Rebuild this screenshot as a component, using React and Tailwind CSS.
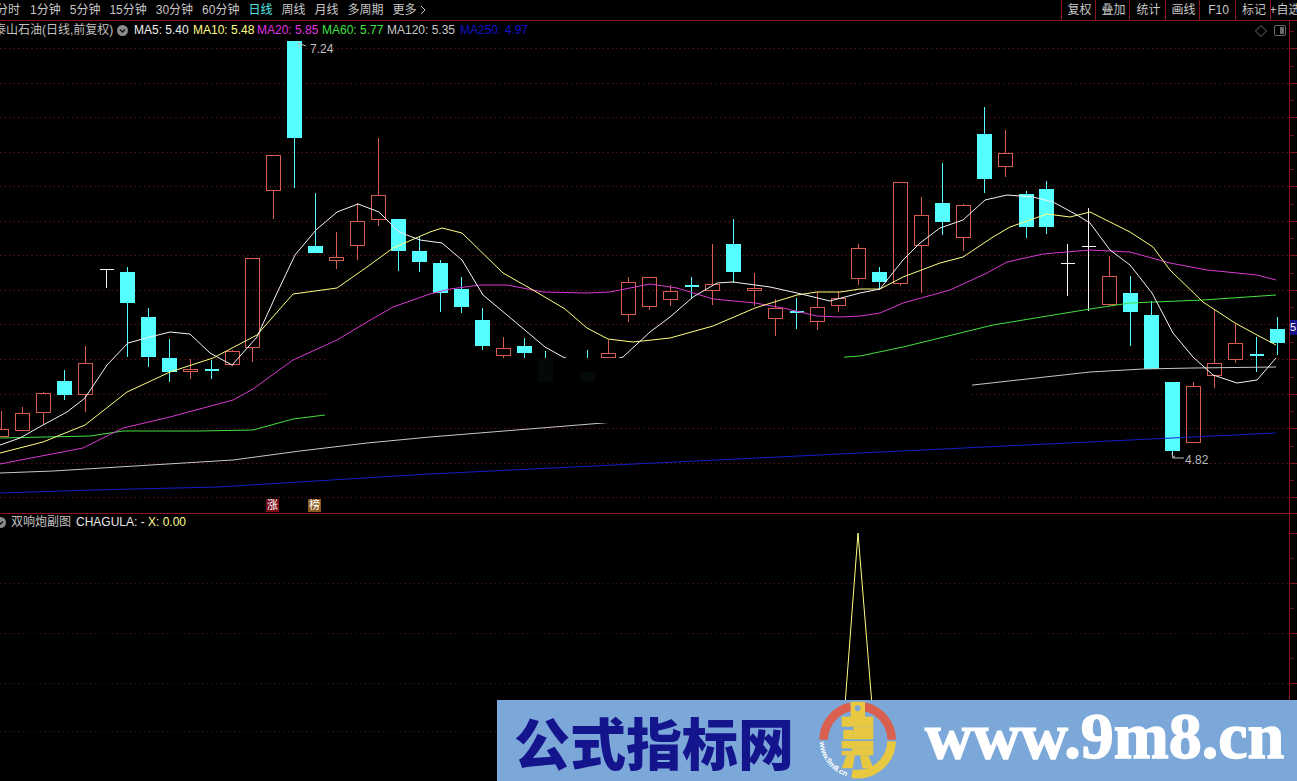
const SANS = 'font-["Liberation_Sans","Noto_Sans_CJK_SC",sans-serif]'

const PERIODS = [
  { label: '分时', cls: '-ml-[4px] mr-[1px]' },
  { label: '1分钟' }, { label: '5分钟' }, { label: '15分钟' }, { label: '30分钟' }, { label: '60分钟' },
  { label: '日线', cls: 'text-[#55e8e8]' }, { label: '周线' }, { label: '月线' }, { label: '多周期' },
]
const TOOLS = [
  ['复权', 'w-[34px]'], ['叠加', 'w-[34px]'], ['统计', 'w-[36px]'], ['画线', 'w-[34px]'],
  ['F10', 'w-[36px]'], ['标记', 'w-[35px]'], ['+自选', 'w-[27px]'],
]
const LEGEND = [
  ['MA5: 5.40', 'text-[#f0f0f0]', 'w-[59px]'],
  ['MA10: 5.48', 'text-[#ffff80]', 'w-[64px]'],
  ['MA20: 5.85', 'text-[#e030e0]', 'w-[65px]'],
  ['MA60: 5.77', 'text-[#40e040]', 'w-[65px]'],
  ['MA120: 5.35', 'text-[#c8c8c8]', 'w-[73px]'],
  ['MA250: 4.97', 'text-[#1414c0]', 'w-[70px]'],
]

// x, high, low, body top, body bottom, kind
const CANDLES = [
  [1, 411, 437, 429, 437, 'r'], [22, 407, 431, 413, 431, 'r'], [43, 392, 424, 393, 413, 'r'],
  [64, 370, 400, 381, 395, 'c'], [85, 346, 412, 363, 395, 'r'], [106, 269, 288, 269, 269, 'w'],
  [127, 267, 357, 272, 303, 'c'], [148, 308, 367, 317, 357, 'c'], [169, 339, 382, 358, 372, 'c'],
  [190, 359, 379, 369, 372, 'r'], [211, 360, 379, 369, 369, 'd'], [232, 350, 366, 351, 365, 'r'],
  [252, 258, 362, 258, 348, 'r'], [273, 155, 219, 155, 191, 'r'], [294, 41, 188, 41, 138, 'c'],
  [315, 193, 253, 246, 253, 'c'], [336, 232, 269, 257, 261, 'r'], [357, 203, 260, 221, 246, 'r'],
  [378, 138, 226, 195, 220, 'r'], [398, 219, 271, 219, 251, 'c'], [419, 237, 272, 251, 262, 'c'],
  [440, 260, 312, 263, 293, 'c'], [461, 277, 313, 289, 307, 'c'], [482, 308, 350, 320, 346, 'c'],
  [503, 337, 358, 348, 356, 'r'], [524, 338, 358, 346, 353, 'c'], [545, 351, 358, 358, 358, 'c'],
  [587, 350, 358, 358, 358, 'c'], [608, 340, 358, 353, 358, 'r'],
  [628, 277, 322, 282, 315, 'r'], [649, 277, 310, 277, 307, 'r'], [670, 285, 306, 291, 300, 'r'],
  [691, 277, 299, 285, 285, 'd'], [712, 244, 305, 284, 291, 'r'], [733, 219, 283, 244, 272, 'c'],
  [754, 273, 306, 288, 291, 'r'], [775, 299, 336, 308, 319, 'r'], [796, 298, 329, 311, 311, 'd'],
  [817, 292, 330, 307, 322, 'r'], [838, 292, 312, 298, 306, 'r'], [858, 244, 285, 248, 279, 'r'],
  [879, 267, 290, 272, 282, 'c'], [900, 182, 286, 182, 284, 'r'], [921, 197, 293, 215, 246, 'r'],
  [942, 163, 235, 203, 222, 'c'], [963, 204, 251, 205, 238, 'r'], [984, 107, 193, 134, 179, 'c'],
  [1005, 130, 177, 153, 167, 'r'], [1026, 191, 238, 194, 227, 'c'], [1046, 181, 234, 189, 227, 'c'],
  [1067, 244, 296, 263, 263, 'w'], [1088, 208, 311, 246, 246, 'w'], [1109, 256, 306, 276, 305, 'r'],
  [1130, 276, 346, 293, 312, 'c'], [1151, 301, 369, 315, 369, 'c'], [1172, 382, 456, 382, 451, 'c'],
  [1193, 382, 443, 386, 443, 'r'], [1214, 310, 388, 363, 376, 'r'], [1235, 324, 363, 343, 360, 'r'],
  [1256, 337, 372, 354, 354, 'd'], [1277, 317, 355, 329, 343, 'c'],
]

const MA_LINES = [
  { color: '#141ec8', pts: '0,493 93,490 217,487 430,474 860,453 1276,433' },
  { color: '#c8c8c8', pts: '0,473 53,471 200,462 233,460 300,451 367,443 430,437 603,423 973,385 1090,372 1143,369 1193,368 1276,367' },
  { color: '#44e040', pts: '0,438 90,436 123,431 200,431 253,430 293,419 325,415 840,365 845,357 860,356 903,347 993,325 1090,309 1130,303 1203,300 1276,295' },
  { color: '#d83ad0', pts: '0,464 83,448 123,428 170,417 233,400 253,389 293,360 337,340 367,322 393,307 430,294 450,289 480,285 507,285 543,292 587,293 610,292 650,284 677,288 713,299 755,303 783,308 817,316 840,317 860,316 880,313 903,303 950,290 987,273 1007,262 1043,254 1090,250 1130,252 1170,263 1207,270 1257,275 1276,280' },
  { color: '#ffff80', pts: '0,453 43,442 85,425 127,392 170,372 213,358 257,335 293,294 337,288 367,267 393,248 430,232 442,228 462,233 503,273 533,290 565,309 587,328 608,339 633,342 670,338 713,326 755,308 797,295 817,292 840,292 860,289 880,289 903,277 940,263 963,257 993,237 1010,227 1047,214 1070,217 1090,212 1130,232 1153,247 1170,270 1203,302 1235,323 1257,335 1276,345' },
  { color: '#f4f4f4', pts: '0,445 20,438 43,425 67,412 85,398 97,380 107,365 128,343 150,337 170,332 190,334 210,353 232,365 257,337 277,293 295,255 316,230 337,212 358,204 379,212 399,232 420,240 442,243 462,260 483,295 507,315 545,347 563,357 590,367 623,357 650,332 670,317 693,297 717,283 733,282 770,287 797,293 830,301 860,293 880,289 903,260 920,243 940,228 963,220 985,200 1007,195 1033,197 1053,202 1077,215 1090,223 1110,250 1130,265 1152,293 1173,333 1193,357 1213,375 1237,383 1257,380 1276,358' },
]

const MAIN_GRID = Array.from({ length: 14 }, (_, i) => Math.round(48 + i * 34.55) + 0.5)
const SUB_GRID = [583.5, 633.5, 683.5, 731.5]

function Candle({ c }) {
  const [raw, high, low, top, bottom, kind] = c
  const x = raw + 0.5
  if (kind === 'w' || kind === 'd') {
    const color = kind === 'w' ? '#f4f4f4' : '#55ffff'
    return (
      <g stroke={color}>
        <line x1={x} x2={x} y1={high} y2={low} />
        <line x1={x - 7} x2={x + 7} y1={top + 0.5} y2={top + 0.5} strokeWidth={kind === 'd' ? 2 : 1} />
      </g>
    )
  }
  if (kind === 'c') {
    return (
      <g>
        <line x1={x} x2={x} y1={high} y2={low} stroke="#55ffff" />
        <rect x={x - 7.5} y={top} width={15} height={Math.max(bottom - top, 1)} fill="#55ffff" />
      </g>
    )
  }
  return (
    <g stroke="#d95c50">
      <line x1={x} x2={x} y1={high} y2={top} />
      <line x1={x} x2={x} y1={bottom} y2={low} />
      <rect x={x - 7} y={top + 0.5} width={14} height={Math.max(bottom - top - 1, 1)} fill="none" />
    </g>
  )
}

function AxisTicks({ grid, dim }) {
  const step = grid.length > 1 ? (grid[1] - grid[0]) / 2 : 0
  return (
    <g stroke="#8a1420" shapeRendering="crispEdges">
      {grid.map(y => <line key={y} x1={1289} x2={1297} y1={y} y2={y} />)}
      {grid.map(y => <line key={`m${y}`} x1={1289} x2={1294} y1={y - step} y2={y - step} stroke={dim} />)}
    </g>
  )
}

function MainChart() {
  return (
    <svg className="absolute inset-0 block" width="1297" height="492" viewBox="0 21 1297 492">
      {MAIN_GRID.map(y => (
        <line key={y} x1={0} x2={1289} y1={y} y2={y} stroke="#7a1c1c" strokeDasharray="1 3.5" />
      ))}
      <g shapeRendering="crispEdges">
        {CANDLES.map(c => <Candle key={c[0]} c={c} />)}
      </g>
      {MA_LINES.map(l => <polyline key={l.color} points={l.pts} fill="none" stroke={l.color} strokeWidth="1" />)}
      {/* dark patch in the source picture */}
      <rect x="325" y="358" width="647" height="65" fill="#000" />
      <rect x="538" y="358" width="15" height="24" fill="#030808" />
      <rect x="580" y="372" width="15" height="10" fill="#030808" />
      <line x1="1289.5" x2="1289.5" y1="21" y2="513" stroke="#8a1420" />
      <AxisTicks grid={MAIN_GRID} dim="#6a1018" />
      <path d="M298 43 l8 3 M298 43 l2 5" stroke="#c0c0c0" fill="none" />
      <path d="M1172 453 l1 5 h11 M1172 458 l3 -2" stroke="#c0c0c0" fill="none" />
    </svg>
  )
}

function SubChart() {
  return (
    <svg className="absolute inset-0 block" width="1297" height="267" viewBox="0 514 1297 267">
      {SUB_GRID.map(y => (
        <line key={y} x1={0} x2={1289} y1={y} y2={y} stroke="#561414" strokeDasharray="1 3.5" />
      ))}
      <polyline points="845,705 858,533 872,705" fill="none" stroke="#ffff80" strokeWidth="1" />
      <line x1="1289.5" x2="1289.5" y1="514" y2="781" stroke="#8a1420" />
      <AxisTicks grid={[533.5, 583.5, 633.5, 683.5]} dim="#5a1018" />
    </svg>
  )
}

function RoundIcon({ cls }) {
  return (
    <svg className={cls} width="11" height="11" viewBox="0 0 11 11">
      <circle cx="5.5" cy="5.5" r="5.5" fill="#8c8c8c" />
      <path d="M3 4.5 L5.5 7 L8 4.5" fill="none" stroke="#111" strokeWidth="1.4" />
    </svg>
  )
}

function Logo() {
  return (
    <svg className="absolute left-[303px] top-0" width="120" height="81" viewBox="0 60 360 243">
      <g fill="none" strokeWidth="26">
        <path d="M71 179 A102 102 0 0 1 152 80" stroke="#d9604e" />
        <path d="M194 80 A102 102 0 0 1 275 179" stroke="#d9604e" />
        <path d="M275 184 A102 102 0 0 1 156 281" stroke="#e8c840" />
      </g>
      <g fill="#e8c840">
        <path fillRule="evenodd" d="M152 65 H195 V115 H152 Z M173 76 a9 9 0 1 0 0.01 0 Z" />
        <rect x="125" y="110" width="95" height="30" />
        <rect x="160" y="140" width="60" height="38" />
        <rect x="130" y="150" width="30" height="28" />
        <rect x="125" y="183" width="95" height="22" />
        <rect x="155" y="205" width="65" height="8" />
        <rect x="125" y="213" width="95" height="13" />
        <path d="M140 226 H165 L158 265 H125 Z" />
        <path d="M180 226 H205 L220 265 H187 Z" />
      </g>
      <defs>
        <path id="logo-arc" d="M59 186 A115 115 0 0 0 150 292" />
      </defs>
      <text fill="#fff" fontSize="23" fontWeight="700" fontFamily="Liberation Sans, sans-serif">
        <textPath href="#logo-arc">www.9m8.cn</textPath>
      </text>
    </svg>
  )
}

export default function App() {
  return (
    <div className={`w-[1297px] h-[781px] bg-black overflow-hidden relative flex flex-col ${SANS}`}>
      <div className="h-[21px] shrink-0 border-b border-[#8a1420] flex items-center text-[12px] text-[#c8c8c8] whitespace-nowrap">
        <div className="flex items-center gap-[9px]">
          {PERIODS.map(p => <span key={p.label} className={p.cls}>{p.label}</span>)}
          <span className="flex items-center gap-[3px]">
            更多
            <svg width="6" height="10" viewBox="0 0 6 10"><path d="M1 1 L5 5 L1 9" fill="none" stroke="#c8c8c8" /></svg>
          </span>
        </div>
        <div className="ml-auto flex h-full overflow-hidden">
          {TOOLS.map(([t, w]) => (
            <div key={t} className={`${w} h-full border-l border-[#8a1420] flex items-center justify-center shrink-0 overflow-hidden`}>
              <span className="shrink-0 pl-[2px]">{t}</span>
            </div>
          ))}
        </div>
      </div>

      <div className="h-[493px] shrink-0 relative border-b border-[#8a1420]">
        <MainChart />
        <div className="relative flex items-center h-[18px] text-[12px] whitespace-nowrap">
          <span className="-ml-[6px] text-[#c0c0c0] w-[123px]">泰山石油(日线,前复权)</span>
          <RoundIcon cls="shrink-0" />
          <div className="flex ml-[6px]">
            {LEGEND.map(([t, c, w]) => <span key={t} className={`${c} ${w}`}>{t}</span>)}
          </div>
          <svg className="absolute left-[1255px] top-[3px]" width="34" height="14" viewBox="0 0 34 14">
            <path d="M6 1.5 L11.5 7 L6 12.5 L0.5 7 Z" fill="none" stroke="#6a6a6a" />
            <rect x="19.5" y="1.5" width="11" height="10" rx="1.5" fill="none" stroke="#6a6a6a" />
            <rect x="25" y="3" width="4" height="7" fill="#6a6a6a" />
          </svg>
        </div>
        <span className="absolute left-[310px] top-[19px] text-[12px] text-[#c0c0c0]">7.24</span>
        <span className="absolute left-[1185px] top-[430px] text-[12px] text-[#b8b8b8]">4.82</span>
        <span className="absolute left-[266px] top-[478px] w-[13px] h-[13px] bg-[#7a0c18] text-white text-[11px] leading-[13px] text-center">涨</span>
        <span className="absolute left-[308px] top-[478px] w-[13px] h-[13px] bg-[#8a5a1c] text-white text-[11px] leading-[13px] text-center">榜</span>
        <span className="absolute left-[1290px] top-[299px] w-[7px] h-[15px] bg-[#14148c] text-white text-[11px] leading-[15px] overflow-hidden">5</span>
      </div>

      <div className="flex-1 relative">
        <SubChart />
        <div className="relative flex items-center h-[16px] text-[12px] whitespace-nowrap">
          <RoundIcon cls="-ml-[5px] shrink-0" />
          <span className="ml-[5px] w-[65px] text-[#c0c0c0]">双响炮副图</span>
          <span className="w-[72px] text-[#e8e8e8]">CHAGULA: -</span>
          <span className="text-[#ffff90]">X: 0.00</span>
        </div>
      </div>

      <div className="absolute left-[497px] right-0 top-[700px] bottom-0 bg-[#7ba8d8] flex items-center">
        <span className='ml-[17px] text-[56px] leading-none font-black text-[#14148c] font-["Noto_Sans_CJK_SC",sans-serif] whitespace-nowrap'>公式指标网</span>
        <Logo />
        <span className='absolute left-[428px] top-0 text-[66px] leading-[72px] font-bold text-white [-webkit-text-stroke:1.5px_white] font-["Liberation_Serif",serif] whitespace-nowrap'>www.9m8.cn</span>
      </div>
    </div>
  )
}
